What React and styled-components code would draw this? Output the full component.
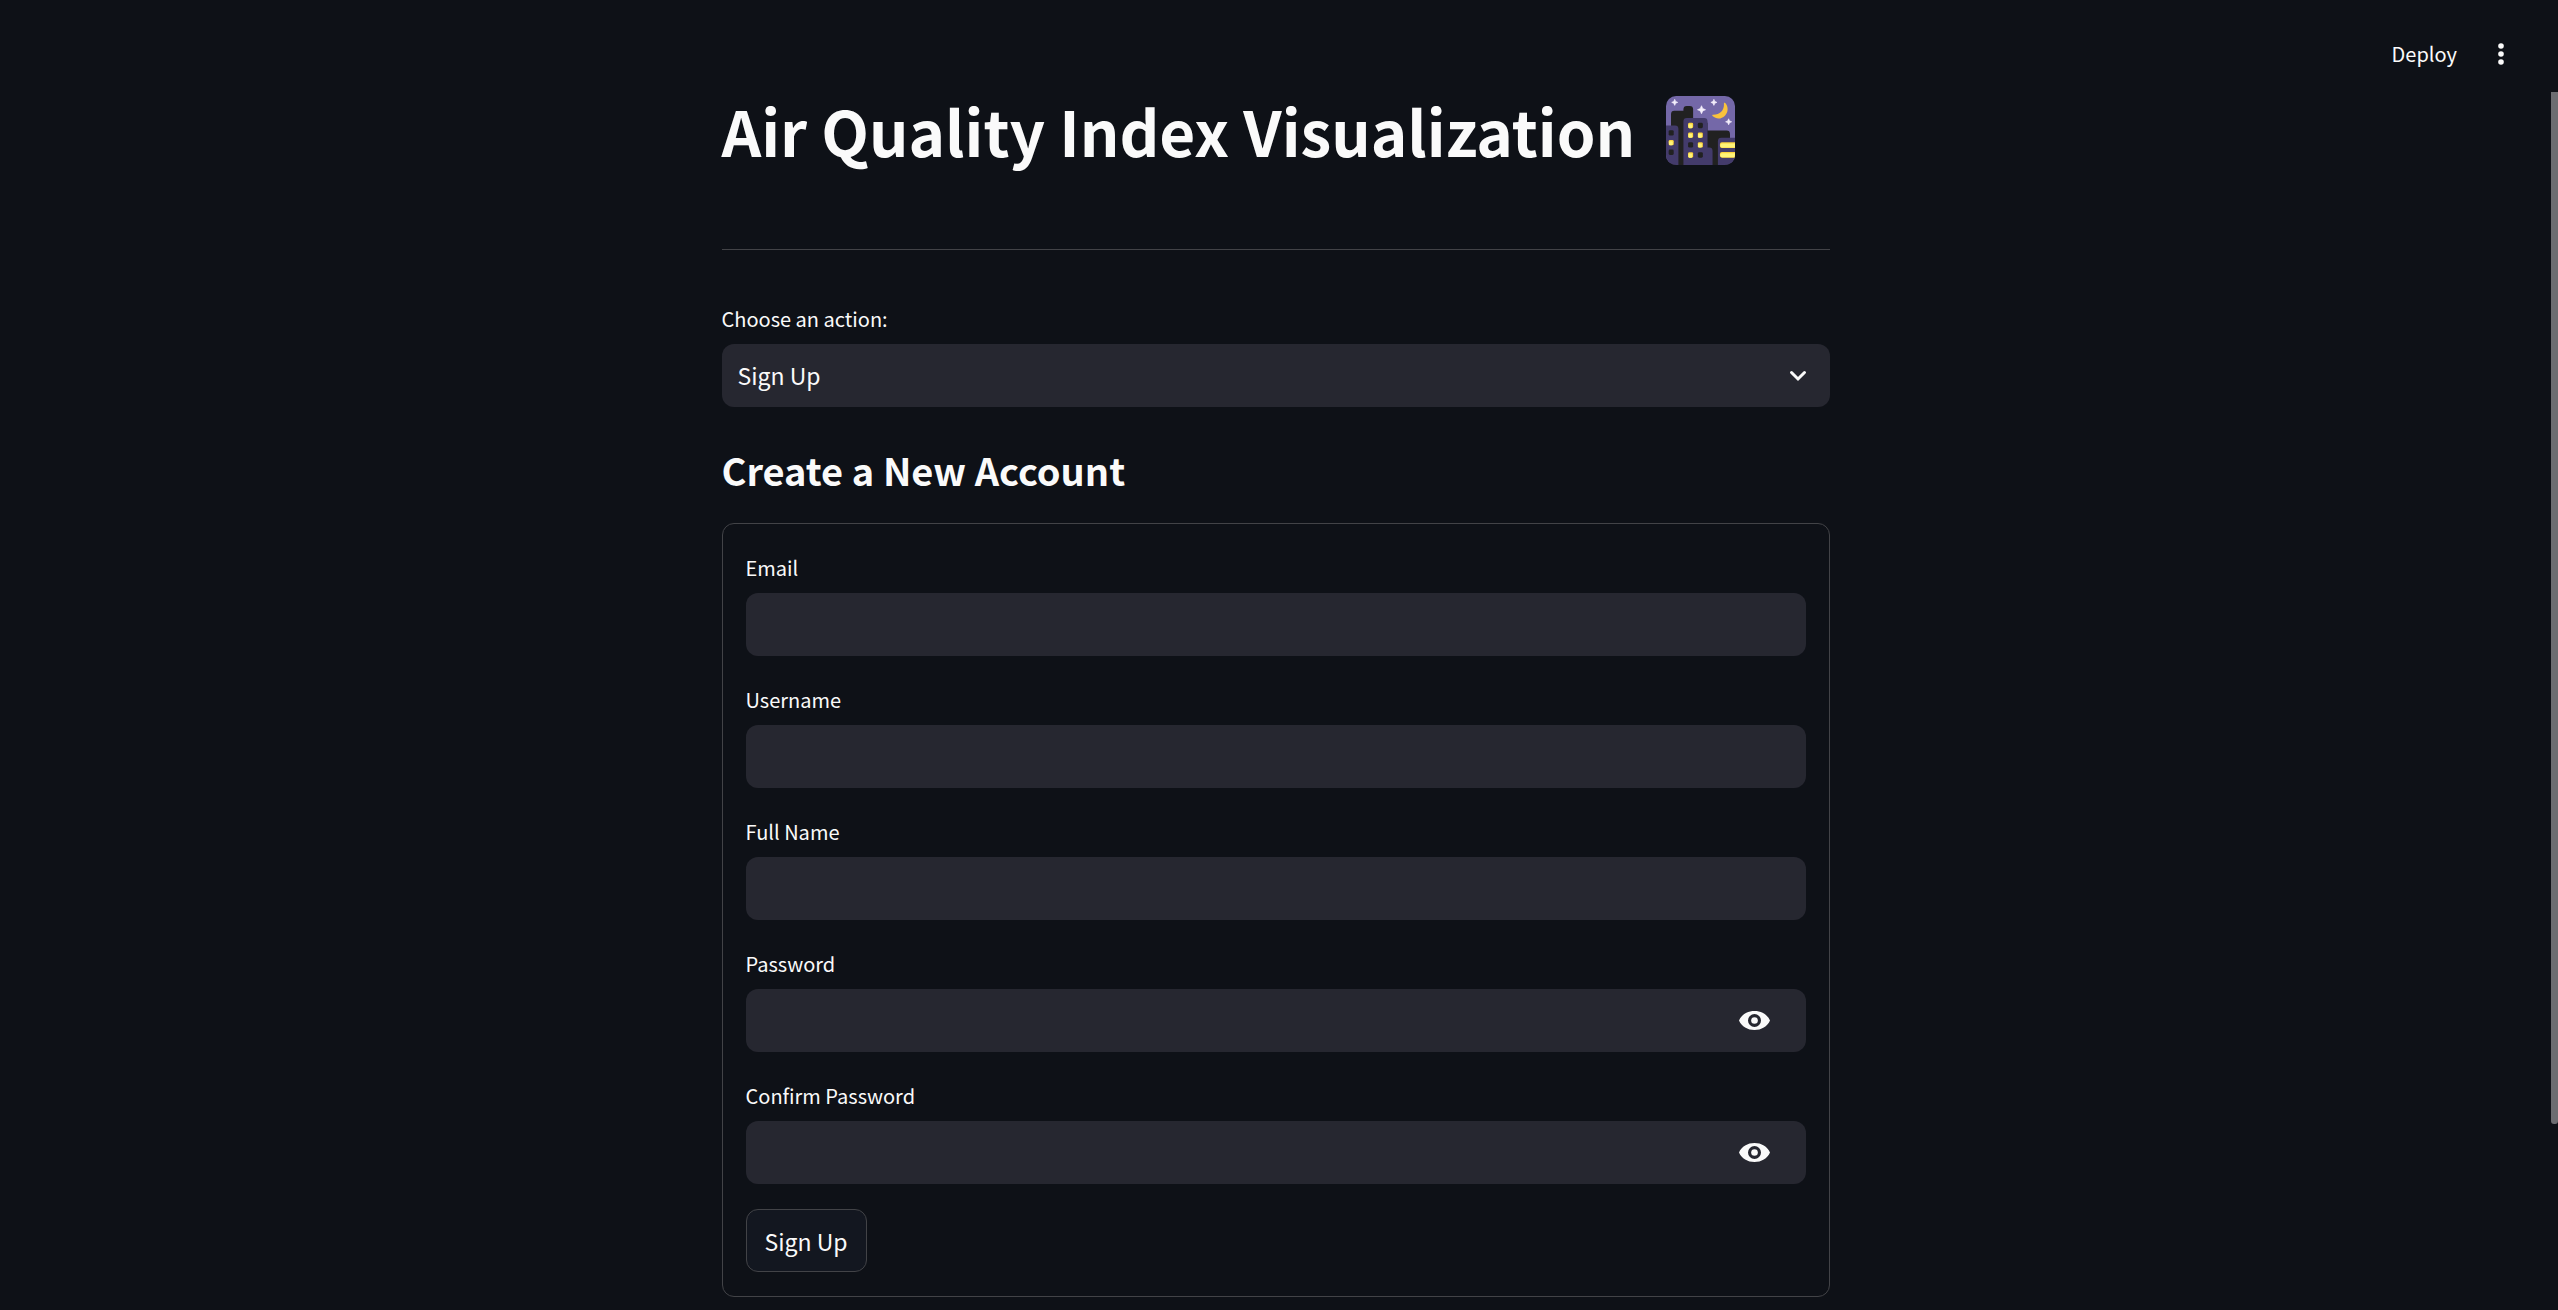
import React, { useState } from "react";
import styled, { createGlobalStyle } from "styled-components";

const color = {
  page: "#0e1117",
  field: "#262730",
  button: "#131720",
  text: "#fafafa",
  line: "#424347",
  thumb: "#6c6d71",
};

const GlobalStyle = createGlobalStyle`
  *, *::before, *::after { box-sizing: border-box; }
  body {
    margin: 0;
    background: ${color.page};
    color: ${color.text};
    font-family: "Noto Sans CJK SC", "Noto Sans", sans-serif;
    font-size: 23px;
    overflow: hidden;
  }
  button, input, select { font: inherit; color: inherit; }
`;

const Shell = styled.div`
  min-height: 100vh;
  padding-right: 7px;
`;

const Toolbar = styled.header`
  position: absolute;
  top: 0;
  right: 0;
  height: 108px;
  padding-right: 41px;
  display: flex;
  align-items: center;
  gap: 28px;
`;

const ToolbarButton = styled.button`
  display: flex;
  align-items: center;
  justify-content: center;
  min-width: 32px;
  height: 40px;
  padding: 0;
  border: 0;
  background: none;
  font-size: 20px;
  line-height: 32px;
  cursor: pointer;
`;

const Column = styled.main`
  max-width: 1108px;
  margin: 0 auto;
  padding: 89px 0 12px;
`;

const Title = styled.h1`
  display: flex;
  align-items: center;
  gap: 31px;
  margin: 0;
  font-size: 62px;
  font-weight: 700;
  line-height: 83px;
`;

const Divider = styled.hr`
  height: 1px;
  margin: 77px 0 50px;
  border: 0;
  background: ${color.line};
`;

const Subtitle = styled.h3`
  margin: 37px 0 27px;
  font-size: 38px;
  font-weight: 600;
  line-height: 52px;
`;

const Field = styled.div`
  display: flex;
  flex-direction: column;
`;

const Label = styled.label`
  height: 44px;
  font-size: 20px;
  line-height: 37px;
`;

const Control = styled.div`
  display: flex;
  align-items: center;
  height: 63px;
  border-radius: 12px;
  background: ${color.field};
  overflow: hidden;
`;

const Input = styled.input`
  flex: 1;
  min-width: 0;
  height: 100%;
  padding: 0 16px;
  border: 0;
  outline: 0;
  background: none;
`;

const SelectWrap = styled(Control)`
  display: grid;
  grid-template-columns: 1fr 64px;

  > * { grid-row: 1; }
  > svg {
    grid-column: 2;
    justify-self: center;
    pointer-events: none;
  }
`;

const Select = styled.select`
  grid-column: 1 / -1;
  height: 63px;
  padding: 0 16px 2px;
  border: 0;
  outline: 0;
  appearance: none;
  background: none;
  cursor: pointer;

  option { background: ${color.field}; }
`;

const EyeButton = styled.button`
  display: flex;
  align-items: center;
  justify-content: center;
  width: 102px;
  height: 100%;
  padding: 0;
  border: 0;
  background: none;
  cursor: pointer;
`;

const Form = styled.form`
  display: flex;
  flex-direction: column;
  align-items: stretch;
  gap: 25px;
  padding: 25px 23px 24px;
  border: 1px solid ${color.line};
  border-radius: 12px;
`;

const SubmitButton = styled.button`
  align-self: flex-start;
  height: 63px;
  padding: 0 18px;
  border: 1px solid ${color.line};
  border-radius: 12px;
  background: ${color.button};
  cursor: pointer;
`;

const ScrollThumb = styled.div`
  position: fixed;
  top: 92px;
  right: 0;
  bottom: 186px;
  width: 7px;
  border-radius: 0 0 3px 3px;
  background: ${color.thumb};
`;

const Star = ({ x, y, r }) => (
  <path
    fill="#f4effc"
    stroke="#f4effc"
    strokeWidth="2"
    strokeLinejoin="round"
    d={`M${x} ${y - r}l${r * 0.3} ${r * 0.7}l${r * 0.7} ${r * 0.3}l${-r * 0.7} ${r * 0.3}l${-r * 0.3} ${r * 0.7}l${-r * 0.3} ${-r * 0.7}l${-r * 0.7} ${-r * 0.3}l${r * 0.7} ${-r * 0.3}z`}
  />
);

const WINDOWS = [
  [8, 102, 0], [8, 131, 1], [8, 160, 0],
  [66, 80, 1], [95, 80, 0],
  [66, 109, 1], [95, 109, 1],
  [66, 138, 0], [95, 138, 1],
  [66, 168, 1], [95, 168, 0],
];

const NightCity = () => (
  <svg width="69" height="69" viewBox="0 0 206 206" role="img" aria-label="Night with stars">
    <defs>
      <clipPath id="tile"><rect width="206" height="206" rx="30" /></clipPath>
    </defs>
    <g clipPath="url(#tile)">
      <rect width="206" height="206" fill="#7468a8" />
      <path fill="#212121" d="M15 206V54q0-10 10-10h27v-4q0-10 10-10h9q10 0 10 10v40h43v23h57q10 0 10 10v93z" />
      <path fill="#433b6b" d="M0 88h27q10 0 10 10v108H0z" />
      <path fill="#433b6b" d="M52 206V76q0-10 10-10h52q10 0 10 10v78h5q10 0 10 10v42z" />
      <path fill="#433b6b" d="M155 206v-71q0-10 10-10h41v81z" />
      {WINDOWS.map(([x, y, lit]) => (
        <g key={`${x}-${y}`}>
          <rect x={x} y={y} width="15" height="16" rx="4" fill={lit ? "#fcd53f" : "#212121"} />
          {lit ? <rect x={x + 1} y={y + 4} width="11" height="12" rx="3" fill="#fff478" /> : null}
        </g>
      ))}
      <path fill="#fcd53f" d="M206 138h-39q-6 0-6 6v5q0 6 6 6h39zM206 167h-39q-6 0-6 6v5q0 6 6 6h39z" />
      <path fill="#fff478" d="M206 142h-39q-5 0-5 6t5 6h39zM206 171h-39q-5 0-5 6t5 6h39z" />
      <path fill="#f9c23c" d="M173 23c-1-3 2-4 4-2c10 11 9 28-1 38c-11 11-26 11-37 1c-2-2-1-4 2-4c20 0 33-13 32-33z" />
      <Star x={26} y={19} r={9} />
      <Star x={106} y={41} r={12} />
      <Star x={143} y={19} r={9} />
      <Star x={187} y={77} r={9} />
    </g>
  </svg>
);

const Eye = () => (
  <svg width="31" height="19" viewBox="0 0 93 57" aria-hidden="true">
    <path
      fill={color.text}
      fillRule="evenodd"
      d="M0 28.500C8 10 26 0 46.500 0S85 10 93 28.500C85 47 67 57 46.500 57S8 47 0 28.500zM46.500 9a19.500 19.500 0 1 0 0 39a19.500 19.500 0 1 0 0-39z"
    />
    <circle cx="46.500" cy="28.500" r="10" fill={color.text} />
  </svg>
);

const Chevron = () => (
  <svg width="18" height="12" viewBox="0 0 18 12" fill="none" aria-hidden="true">
    <path d="M2.500 2.500L9 9l6.500-6.500" stroke={color.text} strokeWidth="3" strokeLinecap="round" />
  </svg>
);

const Dots = () => (
  <svg width="6" height="22" viewBox="0 0 6 22" fill={color.text} aria-hidden="true">
    <circle cx="3" cy="3" r="2.800" />
    <circle cx="3" cy="11" r="2.800" />
    <circle cx="3" cy="19" r="2.800" />
  </svg>
);

function TextField({ id, label, secret }) {
  const [shown, setShown] = useState(false);
  return (
    <Field>
      <Label htmlFor={id}>{label}</Label>
      <Control>
        <Input id={id} type={secret && !shown ? "password" : "text"} />
        {secret ? (
          <EyeButton type="button" aria-label={`Show ${label}`} onClick={() => setShown(!shown)}>
            <Eye />
          </EyeButton>
        ) : null}
      </Control>
    </Field>
  );
}

export default function App() {
  return (
    <Shell>
      <GlobalStyle />
      <Toolbar>
        <ToolbarButton type="button">Deploy</ToolbarButton>
        <ToolbarButton type="button" aria-label="Main menu">
          <Dots />
        </ToolbarButton>
      </Toolbar>
      <Column>
        <Title>
          Air Quality Index Visualization
          <NightCity />
        </Title>
        <Divider />
        <Field>
          <Label htmlFor="action">Choose an action:</Label>
          <SelectWrap>
            <Select id="action" defaultValue="Sign Up">
              <option>Sign Up</option>
            </Select>
            <Chevron />
          </SelectWrap>
        </Field>
        <Subtitle>Create a New Account</Subtitle>
        <Form onSubmit={(event) => event.preventDefault()}>
          <TextField id="email" label="Email" />
          <TextField id="username" label="Username" />
          <TextField id="full-name" label="Full Name" />
          <TextField id="password" label="Password" secret />
          <TextField id="confirm-password" label="Confirm Password" secret />
          <SubmitButton type="submit">Sign Up</SubmitButton>
        </Form>
      </Column>
      <ScrollThumb />
    </Shell>
  );
}
